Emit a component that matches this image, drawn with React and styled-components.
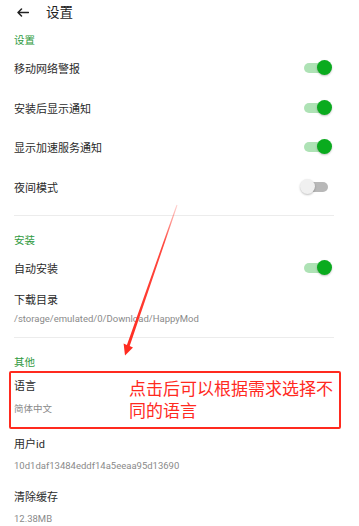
import React from "react";
import styled, { createGlobalStyle } from "styled-components";

const COLORS = {
  text: "#2b2b2b",
  sub: "#8a8a8a",
  green: "#2f9a3e",
  thumbOn: "#0aab1e",
  trackOn: "#aee2b5",
  thumbOff: "#f0f0f0",
  trackOff: "#b8b8b8",
  divider: "#ececec",
  red: "#ff2a1f",
};

const GlobalStyle = createGlobalStyle`
  html, body {
    margin: 0;
    padding: 0;
    background: #fff;
  }
  body {
    font-family: Roboto, "Noto Sans CJK SC", sans-serif;
    color: ${COLORS.text};
  }
`;

const Page = styled.div`
  position: relative;
  width: 359px;
  height: 526px;
  overflow: hidden;
  background: #fff;
`;

const Header = styled.header`
  height: 35px;
  padding-bottom: 11px;
  box-sizing: border-box;
  display: flex;
  align-items: center;
  padding-left: 17px;
  gap: 17px;
`;

const Title = styled.h1`
  margin: 0;
  font-size: 13.5px;
  font-weight: 400;
  line-height: 24px;
  color: #222;
`;

const SectionTitle = styled.div`
  height: 12px;
  line-height: 12px;
  font-size: 10.5px;
  color: ${COLORS.green};
  padding-left: 14px;
  margin-bottom: 1.5px;
`;

const Divider = styled.hr`
  border: none;
  height: 1px;
  background: ${COLORS.divider};
  margin: ${({ top }) => top}px 25px 19px 14px;
`;

const SwitchRow = styled.div`
  height: 39.5px;
  display: flex;
  align-items: center;
  justify-content: space-between;
  padding: 0 ${({ offset }) => offset}px 0 14px;
  font-size: 11px;
`;

const TextRow = styled.div`
  display: flex;
  flex-direction: column;
  padding: ${({ top }) => top}px 14px ${({ bottom }) => bottom}px;
`;

const RowLabel = styled.div`
  font-size: 11px;
  line-height: 17px;
`;

const RowValue = styled.div`
  font-size: 9.5px;
  line-height: 16px;
  color: ${COLORS.sub};
  margin-top: ${({ gap }) => gap}px;
  white-space: nowrap;
`;

const SwitchBox = styled.div`
  position: relative;
  width: 32px;
  height: 16px;
`;

const Track = styled.div`
  position: absolute;
  left: 4px;
  right: 4px;
  top: 3px;
  height: 10px;
  border-radius: 5px;
  background: ${({ on }) => (on ? COLORS.trackOn : COLORS.trackOff)};
`;

const Thumb = styled.div`
  position: absolute;
  top: 0;
  ${({ on }) => (on ? "right: 0;" : "left: 0;")}
  width: 15px;
  height: 15px;
  border-radius: 50%;
  background: ${({ on }) => (on ? COLORS.thumbOn : COLORS.thumbOff)};
  box-shadow: 0 1px 2px rgba(0, 0, 0, 0.25);
`;

const Highlight = styled.div`
  display: flex;
  margin: 2px 18px 0 9px;
  border: 2px solid ${COLORS.red};
  border-radius: 2px;
  padding: 5px 3px;
`;

const HighlightLeft = styled.div`
  width: 115px;
  flex: none;
  display: flex;
  flex-direction: column;
`;

const Note = styled.div`
  flex: 1;
  align-self: center;
  font-size: 17px;
  line-height: 22px;
  color: ${COLORS.red};
`;

const Overlay = styled.svg`
  position: absolute;
  left: 0;
  top: 0;
  pointer-events: none;
`;

const Switch = ({ on }) => (
  <SwitchBox>
    <Track on={on ? 1 : 0} />
    <Thumb on={on ? 1 : 0} />
  </SwitchBox>
);

const BackIcon = () => (
  <svg width="12" height="9" viewBox="0 0 12 9">
    <path
      d="M4.5 1 L1 4.5 L4.5 8 M1 4.5 H11.5"
      fill="none"
      stroke="#222"
      strokeWidth="1.5"
      strokeLinecap="round"
      strokeLinejoin="round"
    />
  </svg>
);

const generalRows = [
  ["移动网络警报", true],
  ["安装后显示通知", true],
  ["显示加速服务通知", true],
  ["夜间模式", false],
];

export default function App() {
  return (
    <Page>
      <GlobalStyle />
      <Header>
        <BackIcon />
        <Title>设置</Title>
      </Header>

      <SectionTitle>设置</SectionTitle>
      {generalRows.map(([label, on]) => (
        <SwitchRow key={label} offset={27}>
          {label}
          <Switch on={on} />
        </SwitchRow>
      ))}
      <Divider top={8} />

      <SectionTitle>安装</SectionTitle>
      <SwitchRow offset={27}>
        自动安装
        <Switch on />
      </SwitchRow>
      <TextRow top={4} bottom={10}>
        <RowLabel>下载目录</RowLabel>
        <RowValue gap={2}>/storage/emulated/0/Download/HappyMod</RowValue>
      </TextRow>
      <Divider top={0} />

      <SectionTitle>其他</SectionTitle>
      <Highlight>
        <HighlightLeft>
          <RowLabel>语言</RowLabel>
          <RowValue gap={6}>简体中文</RowValue>
        </HighlightLeft>
        <Note>点击后可以根据需求选择不同的语言</Note>
      </Highlight>
      <TextRow top={7.5} bottom={8}>
        <RowLabel>用户id</RowLabel>
        <RowValue gap={4.5}>10d1daf13484eddf14a5eeaa95d13690</RowValue>
      </TextRow>
      <TextRow top={7.5} bottom={8}>
        <RowLabel>清除缓存</RowLabel>
        <RowValue gap={4.5}>12.38MB</RowValue>
      </TextRow>

      <Overlay width="359" height="526" viewBox="0 0 359 526">
        <defs>
          <linearGradient id="fade" x1="177" y1="205" x2="125" y2="355" gradientUnits="userSpaceOnUse">
            <stop offset="0" stopColor={COLORS.red} stopOpacity="0.2" />
            <stop offset="0.25" stopColor={COLORS.red} stopOpacity="0.85" />
            <stop offset="1" stopColor={COLORS.red} />
          </linearGradient>
        </defs>
        <polygon
          fill="url(#fade)"
          points="177.5,205.2 129.7,346 133,347.4 125,355.5 123.6,343.6 126.9,345 176.5,204.8"
        />
      </Overlay>
    </Page>
  );
}
